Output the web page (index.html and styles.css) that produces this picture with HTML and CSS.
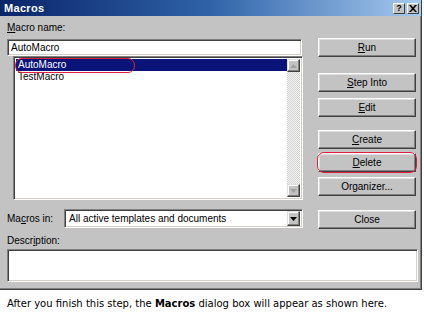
FILE: index.html
```html
<!DOCTYPE html>
<html>
<head>
<meta charset="utf-8">
<link rel="stylesheet" href="styles.css">
</head>
<body>
<div class="dialog">
  <div class="titlebar">
    <span class="title">Macros</span>
    <span class="tbtns">
      <span class="tbtn">?</span>
      <span class="tbtn x">
        <svg width="8" height="7" viewBox="0 0 8 7"><path d="M0 0h2l2 2.2L6 0h2L5 3.5 8 7H6L4 4.8 2 7H0l3-3.5z" fill="#000"/></svg>
      </span>
    </span>
  </div>
  <div class="content">
    <div class="left">
      <div class="lbl top"><u>M</u>acro name:</div>
      <div class="sunken input">AutoMacro</div>
      <div class="sunken list">
        <div class="items">
          <div class="row sel">AutoMacro</div>
          <div class="row">TestMacro</div>
          <span class="mark mark-list"></span>
        </div>
        <div class="vscroll">
          <span class="sbtn"><svg width="7" height="4" viewBox="0 0 7 4"><path d="M3.5 0L7 4H0z" fill="#a0a0a0"/></svg></span>
          <span class="track"></span>
          <span class="sbtn"><svg width="7" height="4" viewBox="0 0 7 4"><path d="M0 0h7L3.5 4z" fill="#a0a0a0"/></svg></span>
        </div>
      </div>
      <div class="inrow">
        <span class="lbl inlbl">Ma<u>c</u>ros in:</span>
        <div class="sunken combo">
          <span class="combotext">All active templates and documents</span>
          <span class="sbtn dd"><svg width="7" height="4" viewBox="0 0 7 4"><path d="M0 0h7L3.5 4z" fill="#000"/></svg></span>
        </div>
      </div>
    </div>
    <div class="right">
      <div class="btn b-run"><span><u>R</u>un</span></div>
      <div class="btn b-step"><span><u>S</u>tep Into</span></div>
      <div class="btn b-edit"><span><u>E</u>dit</span></div>
      <div class="btn b-create"><span><u>C</u>reate</span></div>
      <div class="btn b-delete"><span><u>D</u>elete</span><span class="mark mark-del"></span></div>
      <div class="btn b-org"><span>Or<u>g</u>anizer...</span></div>
      <div class="btn b-close"><span>Close</span></div>
    </div>
  </div>
  <div class="lbl desclbl">Descr<u>i</u>ption:</div>
  <div class="sunken desc"></div>
</div>
<p class="caption">After you finish this step, the <b>Macros</b> dialog box will appear as shown here.</p>
</body>
</html>
```
FILE: styles.css
```css
html, body {
  margin: 0;
  padding: 0;
  background: #fff;
}
body {
  font-family: "Liberation Sans", Arial, sans-serif;
  font-size: 10px;
  color: #000;
}
u { text-decoration: underline; text-underline-offset: 1px; }

.dialog {
  width: 422px;
  height: 290px;
  box-sizing: border-box;
  background: #c3c3c3;
  border-right: 1px solid #404040;
  border-bottom: 1px solid #404040;
  box-shadow: inset -1px -1px 0 #808080;
  display: flex;
  flex-direction: column;
}

.titlebar {
  height: 16px;
  flex: none;
  display: flex;
  align-items: center;
  justify-content: space-between;
  padding: 0 2px 0 4px;
  background: linear-gradient(to right, #0a246a 0%, #2f63a8 50%, #a6caf0 100%);
}
.title {
  color: #fff;
  font-weight: bold;
  font-size: 11px;
  letter-spacing: 0.3px;
}
.tbtns { display: flex; gap: 2px; }
.tbtn {
  width: 12px;
  height: 11px;
  box-sizing: border-box;
  background: #c3c3c3;
  border: 1px solid;
  border-color: #fff #404040 #404040 #fff;
  display: flex;
  align-items: center;
  justify-content: center;
  font-weight: bold;
  font-size: 9px;
  line-height: 8px;
}

.content {
  display: flex;
  padding-left: 7px;
}
.left {
  width: 296px;
  display: flex;
  flex-direction: column;
}
.lbl { line-height: 12px; color: #000; }
.lbl.top { margin-top: 6px; margin-bottom: 5px; }

.sunken {
  box-sizing: border-box;
  background: #fff;
  border: 1px solid;
  border-color: #808080 #fff #fff #808080;
  box-shadow: inset 1px 1px 0 #404040, inset -1px -1px 0 #d4d0c8;
}
.input {
  height: 17px;
  width: 295px;
  padding: 2px 3px;
  line-height: 12px;
}
.list {
  position: relative;
  margin-left: 6px;
  width: 290px;
  height: 144px;
  display: flex;
  padding: 2px;
}
.items {
  position: relative;
  flex: 1;
}
.row {
  height: 12px;
  line-height: 12px;
  padding-left: 2px;
}
.row.sel {
  background: #0a1478;
  color: #fff;
}
.vscroll {
  width: 13px;
  display: flex;
  flex-direction: column;
}
.sbtn {
  width: 13px;
  height: 13px;
  box-sizing: border-box;
  background: #c3c3c3;
  border: 1px solid;
  border-color: #dfdfdf #404040 #404040 #dfdfdf;
  box-shadow: inset -1px -1px 0 #808080, inset 1px 1px 0 #fff;
  display: flex;
  align-items: center;
  justify-content: center;
  flex: none;
}
.track {
  flex: 1;
  background: repeating-conic-gradient(#d4d4d4 0 25%, #f4f4f4 0 50%) 0 0 / 2px 2px;
}

.inrow {
  margin-top: 9px;
  display: flex;
  align-items: center;
  height: 19px;
}
.inlbl { width: 57px; }
.combo {
  width: 239px;
  height: 19px;
  display: flex;
  align-items: center;
  padding: 2px;
}
.combotext { flex: 1; padding-left: 2px; }
.dd { height: 15px; }

.right {
  margin-left: 15px;
  width: 98px;
  display: flex;
  flex-direction: column;
  padding-top: 22px;
}
.btn {
  position: relative;
  height: 19px;
  box-sizing: border-box;
  border: 1px solid;
  border-color: #fff #404040 #404040 #fff;
  box-shadow: inset -1px -1px 0 #808080, inset 1px 1px 0 #dfdfdf;
  background: #c3c3c3;
  display: flex;
  align-items: center;
  justify-content: center;
  line-height: 12px;
}
.b-step { margin-top: 16px; }
.b-edit { margin-top: 6px; }
.b-create { margin-top: 13px; }
.b-delete { margin-top: 4px; }
.b-org { margin-top: 5px; }
.b-close { margin-top: 14px; }

.mark {
  position: absolute;
  border: 1.5px solid #e0203a;
  border-radius: 7px;
  box-sizing: border-box;
}
.mark-list {
  left: -1px;
  top: -1px;
  width: 120px;
  height: 15px;
}
.mark-del {
  left: -2px;
  top: -2px;
  right: -2px;
  bottom: -2px;
}

.desclbl {
  margin: 6px 0 2px 7px;
}
.desc {
  margin-left: 7px;
  width: 411px;
  height: 33px;
}

.caption {
  margin: 0;
  padding: 8px 7px 0;
  font-family: "DejaVu Sans", Verdana, sans-serif;
  font-size: 10px;
  line-height: 12px;
}
```
